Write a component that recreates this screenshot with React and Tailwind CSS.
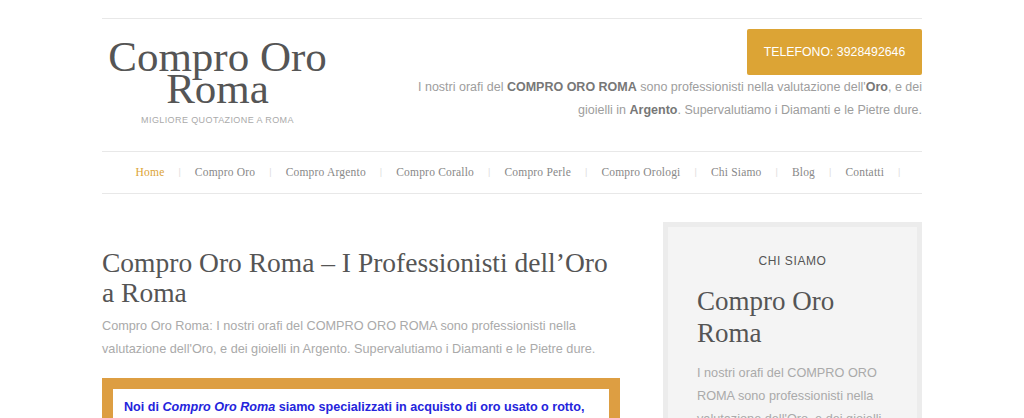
import React from "react";

const serif = { fontFamily: '"Liberation Serif", "Times New Roman", serif' };
const sans = { fontFamily: '"Liberation Sans", Arial, Helvetica, sans-serif' };

const navItems = [
  "Home",
  "Compro Oro",
  "Compro Argento",
  "Compro Corallo",
  "Compro Perle",
  "Compro Orologi",
  "Chi Siamo",
  "Blog",
  "Contatti",
];

export default function App() {
  return (
    <div className="min-h-[418px] bg-white overflow-hidden" style={sans}>
      <div className="mx-auto w-[820px] pt-[18px]">
        {/* Header */}
        <header className="border-t border-[#e8e8e8] flex justify-between">
          <div className="flex flex-col items-center pl-[3px] pt-[22px] w-[228px]">
            <div
              className="text-[43px] leading-[32px] text-[#555555] text-center"
              style={serif}
            >
              Compro Oro
              <br />
              Roma
            </div>
            <div className="mt-[9px] text-[9px] leading-[12px] tracking-[0.4px] text-[#aaaaaa]">
              MIGLIORE QUOTAZIONE A ROMA
            </div>
          </div>
          <div className="flex flex-col items-end pt-[10px]">
            <div className="h-[46px] w-[175px] bg-[#dca435] rounded-[2px] flex items-center justify-center text-white text-[12.3px]">
              TELEFONO: 3928492646
            </div>
            <p className="text-right text-[12.5px] leading-[23px] text-[#9d9d9d] mt-[1px] w-[520px]">
              I nostri orafi del <b className="text-[#777777]">COMPRO ORO ROMA</b> sono
              professionisti nella valutazione dell'<b className="text-[#777777]">Oro</b>, e dei
              gioielli in <b className="text-[#777777]">Argento</b>. Supervalutiamo i Diamanti e
              le Pietre dure.
            </p>
          </div>
        </header>

        {/* Nav */}
        <nav className="mt-[25px] border-t border-b border-[#e8e8e8] h-[43px] flex items-center justify-center pl-[26px]">
          <ul className="flex items-center" style={serif}>
            {navItems.map((item, i) => (
              <li key={item} className="flex items-center">
                <span
                  className={
                    "text-[11.5px] tracking-[0.2px] " +
                    (i === 0 ? "text-[#dca435]" : "text-[#888888]")
                  }
                >
                  {item}
                </span>
                <span className="mx-[14px] text-[9px] text-[#dddddd]" style={sans}>
                  |
                </span>
              </li>
            ))}
          </ul>
        </nav>

        {/* Main */}
        <div className="flex justify-between">
          <main className="w-[518px] pt-[54px]">
            <h1
              className="text-[27.5px] leading-[30px] text-[#555555]"
              style={serif}
            >
              Compro Oro Roma – I Professionisti dell’Oro a Roma
            </h1>
            <p className="mt-[7px] text-[12.7px] leading-[23px] text-[#aaaaaa]">
              Compro Oro Roma: I nostri orafi del COMPRO ORO ROMA sono professionisti nella
              valutazione dell'Oro, e dei gioielli in Argento. Supervalutiamo i Diamanti e le
              Pietre dure.
            </p>
            <div className="mt-[17px] border-[11px] border-[#dd9e42] bg-white px-[11px] pt-[7px] pb-[10px]">
              <p className="text-[12.6px] leading-[23px] font-bold text-[#2424dc]">
                Noi di <i>Compro Oro Roma</i> siamo specializzati in acquisto di oro usato o
                rotto, argento, diamanti, orologi di marca e pietre preziose.
              </p>
            </div>
          </main>

          <aside className="w-[259px] mt-[28px] border-[5px] border-[#ececec] bg-[#f4f4f4] px-[29px] pt-[26px] pb-[20px]">
            <div className="text-center text-[12px] leading-[16px] tracking-[0.6px] text-[#555555]">
              CHI SIAMO
            </div>
            <h2
              className="mt-[16px] text-[27px] leading-[32px] text-[#555555]"
              style={serif}
            >
              Compro Oro Roma
            </h2>
            <p className="mt-[13px] text-[12.7px] leading-[23px] text-[#aaaaaa]">
              I nostri orafi del COMPRO ORO ROMA sono professionisti nella valutazione dell'Oro,
              e dei gioielli in Argento. Supervalutiamo i Diamanti e le Pietre dure.
            </p>
          </aside>
        </div>
      </div>
    </div>
  );
}
